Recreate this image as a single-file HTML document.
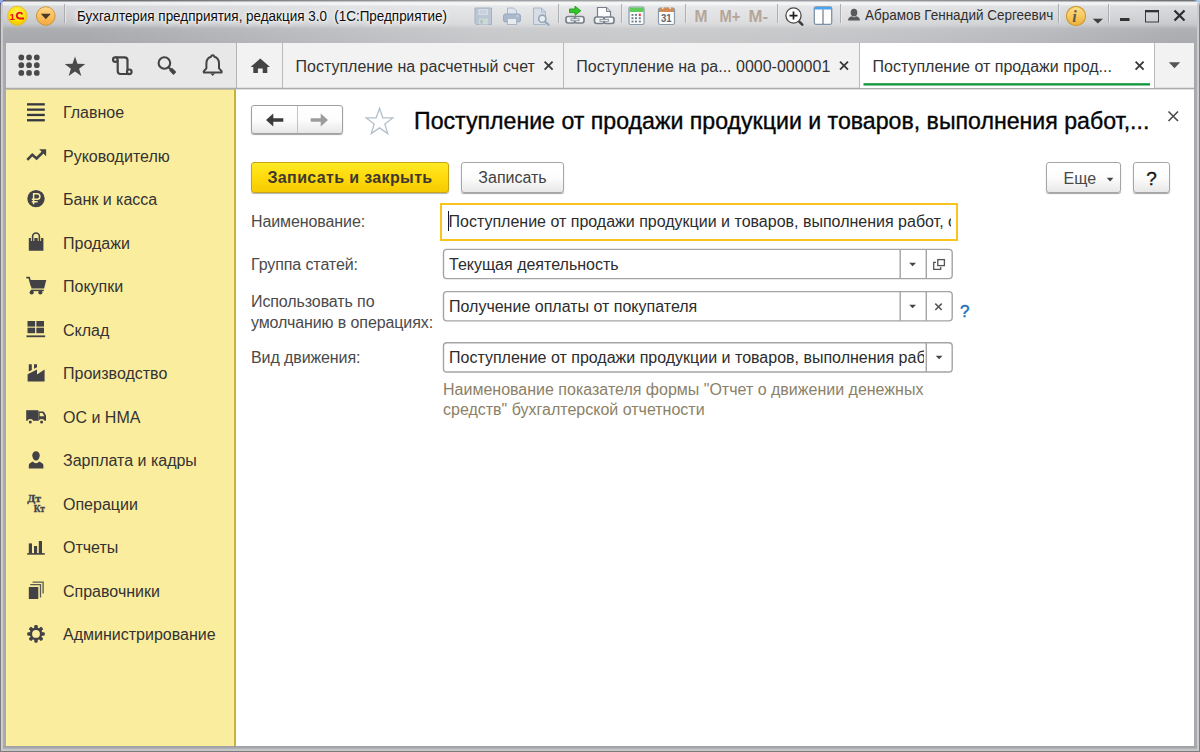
<!DOCTYPE html>
<html lang="ru">
<head>
<meta charset="utf-8">
<title>Бухгалтерия предприятия, редакция 3.0 (1С:Предприятие)</title>
<style>
*{box-sizing:border-box;margin:0;padding:0}
html,body{width:1200px;height:752px;overflow:hidden}
body{position:relative;background:#a4a6aa;font-family:"Liberation Sans",Arial,sans-serif;font-size:16px;color:#333;}
.abs{position:absolute}
svg{display:block;overflow:visible}
/* window frame */
#frame{left:0;top:0;width:1200px;height:752px;background:#a5a7ab}
#fl{left:0;top:3px;width:6px;height:749px;background:linear-gradient(90deg,#7c7c7e 0,#7f7f81 1.100px,#cfcfd0 1.300px,#c9c9cb 3px,#abadb1 3.300px,#a4a6aa 6px)}
#fr{left:1194px;top:3px;width:6px;height:749px;background:linear-gradient(270deg,#7c7c7e 0,#7f7f81 1.100px,#cfcfd0 1.300px,#c9c9cb 3px,#abadb1 3.300px,#a4a6aa 6px)}
#fb{left:0;top:746px;width:1200px;height:6px;background:linear-gradient(180deg,#9a9da2 0,#a6a8ac 1.500px,#b3b5b8 3px,#c6c7c9 3.300px,#c3c4c6 4.600px,#7d7d7f 4.900px,#7b7b7d 6px)}
#fbl{left:0;top:746px;width:3px;height:6px;background:linear-gradient(90deg,#7c7c7e 0,#7f7f81 1.100px,#cfcfd0 1.300px,#c9c9cb 3px)}
#fbr{left:1197px;top:746px;width:3px;height:6px;background:linear-gradient(270deg,#7c7c7e 0,#7f7f81 1.100px,#cfcfd0 1.300px,#c9c9cb 3px)}

#titlebar{left:0;top:0;width:1200px;height:43px;background:linear-gradient(90deg,rgba(255,255,255,0) 0,rgba(255,255,255,0) 7%,rgba(255,255,255,.17) 22%,rgba(255,255,255,.36) 40%,rgba(255,255,255,.38) 55%,rgba(255,255,255,.32) 72%,rgba(255,255,255,.18) 87%,rgba(255,255,255,.04) 98%),linear-gradient(180deg,#66686c 0,#707276 1.200px,#eeeff0 1.800px,#eeeff0 4.800px,#d9dadd 6px,#cecfd2 18px,#c6c7ca 24px,#bdbec1 26px,#aeafb3 28.500px,#aaabaf 34px,#a7a8ac 43px);}
#ttext{left:77px;top:6.500px;font-size:15.200px;color:#0c0c0c;white-space:pre;line-height:18px;transform:scaleX(.885);transform-origin:0 0;text-shadow:0 0 3px #fff,0 0 7px #fff,0 0 10px rgba(255,255,255,.8);}
#user{left:864.500px;top:6px;font-size:15px;color:#2f2f2f;white-space:pre;line-height:18px;transform:scaleX(.898);transform-origin:0 0}
.tsep{width:1px;background:#9a9b9f;box-shadow:1px 0 0 #e6e7e9;top:5px;height:19px}
/* toolbar */
#tools{left:6px;top:43px;width:230px;height:45px;background:#e8e8e8}
#tabs{left:236px;top:43px;width:958px;height:45px;background:#f2f2f2;border-left:1px solid #b4b4b4}
#tabline{left:6px;top:88px;width:1188px;height:1px;background:#acacac;box-shadow:0 1px 0 rgba(170,170,170,.35),0 -1px 0 rgba(170,170,170,.25)}
.tab{top:43px;height:45px;border-right:1px solid #b9b9b9;font-size:16px;line-height:47px;color:#333;white-space:pre}
.tab .x{position:absolute;top:0;font-size:15px;font-weight:bold;color:#333}
/* sidebar */
#side{left:6px;top:89px;width:230px;height:657px;background:#fbed9e;border-right:2px solid #c9b138;border-top:1px solid #d5ca8c;box-shadow:inset 1px 0 0 #fdf3a8,inset -1px 0 0 #fdf3a8}
.nav{left:63px;font-size:16px;color:#333;line-height:20px;white-space:pre}
#main{left:236px;top:89px;width:958px;height:657px;background:#fff}
.lbl{left:251px;font-size:16px;color:#4a4a4a;line-height:18px;white-space:pre;letter-spacing:-.1px}
.fld{left:442px;width:510px;height:30px;border:1px solid transparent;border-radius:3px;background:#fff;font-size:16px;line-height:30px;padding-left:6px;color:#2c2c2c;white-space:pre;overflow:hidden}
.btn{height:32px;border:1px solid #a6a6a6;border-radius:3px;background:linear-gradient(#ffffff,#fdfdfd 50%,#f0f0f0 80%,#e7e7e7);font-size:16px;line-height:30px;text-align:center;color:#424242;box-shadow:0 1px 1px rgba(0,0,0,.36);white-space:pre}
#tb2{background:linear-gradient(90deg,rgba(255,255,255,0) 0,rgba(255,255,255,0) 7%,rgba(255,255,255,.17) 22%,rgba(255,255,255,.36) 40%,rgba(255,255,255,.38) 55%,rgba(255,255,255,.32) 72%,rgba(255,255,255,.18) 87%,rgba(255,255,255,.04) 98%),linear-gradient(180deg,#66686c 0,#707276 1.200px,#eeeff0 1.800px,#eeeff0 4.800px,#d9dadd 6px,#cecfd2 18px,#c6c7ca 24px,#bdbec1 26px,#aeafb3 28.500px,#aaabaf 34px,#a7a8ac 43px);background-size:1200px 43px;background-position:-3px 0;background-repeat:no-repeat}
</style>
</head>
<body>
<div id="frame" class="abs"></div>
<div id="titlebar" class="abs"></div>
<div id="fl" class="abs"></div><div id="fr" class="abs"></div><div id="fb" class="abs"></div><div id="fbl" class="abs" style="height:4.700px"></div><div id="fbr" class="abs" style="height:4.700px"></div>
<div class="abs" style="left:3px;top:0;width:1194px;height:43px" id="tb2"></div>
<div id="ttext" class="abs">Бухгалтерия предприятия, редакция 3.0  (1С:Предприятие)</div>
<div id="user" class="abs">Абрамов Геннадий Сергеевич</div>

<div id="tools" class="abs"></div>
<div id="tabs" class="abs"></div>
<div id="side" class="abs"></div>
<div id="main" class="abs"></div>
<div id="tabline" class="abs"></div>


<div class="abs tab" style="left:237px;width:46px;"></div>
<div class="abs tab" style="left:283px;width:281px;padding-left:12.500px">Поступление на расчетный счет</div>
<div class="abs tab" style="left:564px;width:296px;padding-left:12.300px">Поступление на ра... 0000-000001</div>
<div class="abs tab" style="left:860px;width:295px;padding-left:12.500px;background:#fff">Поступление от продажи прод...</div>


<div class="abs nav" style="top:103.3px">Главное</div>
<div class="abs nav" style="top:146.8px">Руководителю</div>
<div class="abs nav" style="top:190.3px">Банк и касса</div>
<div class="abs nav" style="top:233.8px">Продажи</div>
<div class="abs nav" style="top:277.3px">Покупки</div>
<div class="abs nav" style="top:320.8px">Склад</div>
<div class="abs nav" style="top:364.3px">Производство</div>
<div class="abs nav" style="top:407.8px">ОС и НМА</div>
<div class="abs nav" style="top:451.3px">Зарплата и кадры</div>
<div class="abs nav" style="top:494.8px">Операции</div>
<div class="abs nav" style="top:538.3px">Отчеты</div>
<div class="abs nav" style="top:581.8px">Справочники</div>
<div class="abs nav" style="top:625.3px">Администрирование</div>


<div class="abs btn" style="left:251px;top:105px;width:92px;height:29px;border-color:#9f9f9f"></div>
<div class="abs" style="left:297px;top:106px;width:1px;height:27px;background:#c4c4c4"></div>
<div class="abs" id="h1" style="left:414px;top:107px;font-size:23.15px;line-height:28px;color:#050505;-webkit-text-stroke:.35px #050505;white-space:pre">Поступление от продажи продукции и товаров, выполнения работ,...</div>
<div class="abs" id="ybtn" style="left:251px;top:162px;width:198px;height:31px;letter-spacing:.36px;border:1px solid #c7a413;border-radius:3px;background:linear-gradient(#ffe926,#ffdc0d 45%,#f4cb00);font-weight:bold;font-size:16px;line-height:30px;text-align:center;color:#40382e;box-shadow:0 1px 1px rgba(0,0,0,.3)">Записать и закрыть</div>
<div class="abs btn" style="left:461px;top:162px;width:103px;height:31px;line-height:30px">Записать</div>
<div class="abs btn" style="left:1046px;top:162px;width:75px;height:31px;line-height:32px;text-align:left;padding-left:16.500px;color:#484848">Еще</div>
<div class="abs btn" style="left:1133px;top:162px;width:37px;height:31px;line-height:32px;font-size:19px;color:#111;-webkit-text-stroke:.3px #111">?</div>

<div class="abs lbl" style="top:213px">Наименование:</div>
<div class="abs lbl" style="top:256px">Группа статей:</div>
<div class="abs lbl" style="top:292px;line-height:20.500px">Использовать по
умолчанию в операциях:</div>
<div class="abs lbl" style="top:349px">Вид движения:</div>

<div class="abs fld" style="left:440px;top:203px;width:518px;height:38px;border:2.500px solid #f9c41d;border-radius:0;line-height:33px;padding-left:6.500px;box-shadow:none"><div style="width:502px;overflow:hidden">Поступление от продажи продукции и товаров, выполнения работ, о</div></div>
<div class="abs" style="left:447.700px;top:211px;width:1.500px;height:20px;background:#15153a"></div>
<div class="abs fld" style="top:249px">Текущая деятельность</div>
<div class="abs fld" style="top:291px">Получение оплаты от покупателя</div>
<div class="abs fld" style="top:342px"><div style="width:475px;overflow:hidden">Поступление от продажи продукции и товаров, выполнения работ</div></div>
<div class="abs" style="left:443px;top:380px;font-size:16px;line-height:20px;color:#8b8168;white-space:pre">Наименование показателя формы "Отчет о движении денежных
средств" бухгалтерской отчетности</div>
<div class="abs" style="left:960px;top:301.500px;font-size:17px;line-height:20px;color:#1b6dbb;-webkit-text-stroke:.4px #1b6dbb">?</div>


<svg class="abs" id="ov" style="left:0;top:0" width="1200" height="752" viewBox="0 0 1200 752">
<defs>
<radialGradient id="g1c" cx="0.5" cy="0.35" r="0.7"><stop offset="0" stop-color="#fff36a"/><stop offset="0.6" stop-color="#ffe000"/><stop offset="1" stop-color="#e9b800"/></radialGradient>
<linearGradient id="gor" x1="0" y1="0" x2="0" y2="1"><stop offset="0" stop-color="#ffd98a"/><stop offset="1" stop-color="#f5a83a"/></linearGradient>
<linearGradient id="ginf" x1="0" y1="0" x2="0" y2="1"><stop offset="0" stop-color="#ffe08a"/><stop offset="1" stop-color="#f2b136"/></linearGradient>
</defs>

<g id="titleicons">
<path d="M0 0H6.500A6.500 6.500 0 0 0 0 6.500Z" fill="#4a4a9e"/><path d="M0 0H3.500L0 3.500Z" fill="#8fb0ea"/><path d="M1200 0H1193.500A6.500 6.500 0 0 1 1200 6.500Z" fill="#a9cbf5"/>
<!-- 1C logo -->
<circle cx="17.300" cy="15.800" r="9.600" fill="url(#g1c)" stroke="#e3bd2a" stroke-width="0.900"/>
<text x="9.500" y="19.500" font-family="Liberation Sans, sans-serif" font-weight="bold" font-size="9.800" fill="#e8121a">1</text>
<path d="M22.300 14.400A2.900 2.900 0 1 0 19.600 18.500H24" fill="none" stroke="#e8121a" stroke-width="1.900"/>
<!-- orange menu btn -->
<circle cx="45.8" cy="16" r="9.3" fill="url(#gor)" stroke="#c8963a" stroke-width="1"/>
<path d="M40.8 13.8 h10 l-5 5.4z" fill="#4a3a25"/>
<!-- separators -->
<g stroke="#a4a6aa" stroke-width="1" opacity=".85">
<path d="M64.5 4v19M558.5 4v19M621.5 4v19M685.5 4v19M777.5 4v19M840.5 4v19M1058.5 4v19M1108.5 4v19"/>
</g>
<g stroke="#eceded" stroke-width="1" opacity=".8">
<path d="M65.5 4v19M559.5 4v19M622.5 4v19M686.5 4v19M778.5 4v19M841.5 4v19M1059.5 4v19M1109.5 4v19"/>
</g>
<!-- save (disabled) -->
<g opacity="0.95">
<path d="M475 8h16.5v16.5h-15.2l-1.3-1.3z" fill="#b9c6d4" stroke="#9fb0c2" stroke-width="1"/>
<rect x="478.5" y="9" width="9.5" height="6" fill="#d5dde6"/>
<path d="M480 11h6.5M480 13h6.5" stroke="#b2bfcd" stroke-width=".8"/>
<rect x="479" y="18.5" width="9" height="6" fill="#cfd9d3"/>
<rect x="480.5" y="20" width="2" height="3.5" fill="#a7b6c6"/>
</g>
<!-- printer (disabled) -->
<g>
<path d="M507.5 8h6l3 3v4h-9z" fill="#dfe5ec" stroke="#a9b8c8" stroke-width="1"/>
<rect x="503.5" y="14" width="17" height="8" rx="2" fill="#a9b9cb" stroke="#97a9bd" stroke-width="1"/>
<rect x="507.5" y="18.5" width="9" height="6" fill="#e6ebf0" stroke="#a9b8c8" stroke-width="1"/>
<path d="M516 16h2.5" stroke="#d9e1ea" stroke-width="1"/>
</g>
<!-- preview (disabled) -->
<g>
<path d="M533.5 8h8l4 4v12.5h-12z" fill="#d6dde6" stroke="#a9b8c8" stroke-width="1"/>
<path d="M541.5 8v4h4" fill="none" stroke="#a9b8c8" stroke-width="1"/>
<circle cx="542.3" cy="18.7" r="3.6" fill="#e8edf2" stroke="#93a6ba" stroke-width="1.6"/>
<path d="M545 21.6l3.8 3.3" stroke="#93a6ba" stroke-width="2" stroke-linecap="round"/>
</g>
<!-- link + green arrow -->
<g>
<path d="M569.5 9h5.5v-2.8l5.8 4.6-5.800 4.600v-2.800h-5.500z" fill="#35c42b" stroke="#1e9a18" stroke-width=".9" stroke-linejoin="round"/>
<rect x="566" y="16.500" width="9.500" height="6.500" rx="2.200" fill="#f4f5f6" stroke="#77808a" stroke-width="1.700"/>
<rect x="574.500" y="16.500" width="9.500" height="6.500" rx="2.200" fill="#f4f5f6" stroke="#77808a" stroke-width="1.700"/>
<rect x="571" y="18.800" width="8" height="2" fill="#f4f5f6" stroke="#77808a" stroke-width=".8"/>
</g>
<!-- doc link -->
<g>
<path d="M597.500 7.500h9l4 4v8h-13z" fill="#fdfdfd" stroke="#77808a" stroke-width="1.200"/>
<path d="M606.500 7.500v4h4" fill="#d5dae0" stroke="#77808a" stroke-width="1"/>
<rect x="594.500" y="17" width="10" height="6.500" rx="2.200" fill="#f4f5f6" stroke="#77808a" stroke-width="1.700"/>
<rect x="604" y="17" width="10" height="6.500" rx="2.200" fill="#f4f5f6" stroke="#77808a" stroke-width="1.700"/>
<rect x="600" y="19.300" width="8.500" height="2" fill="#f4f5f6" stroke="#77808a" stroke-width=".8"/>
</g>
<!-- calculator -->
<g>
<rect x="629" y="7" width="15" height="17.500" rx="1.500" fill="#fafbfc" stroke="#8798a8" stroke-width="1.200"/>
<path d="M629.600 8.500a1 1 0 0 1 1-1h12a1 1 0 0 1 1 1v3.500h-14z" fill="#5fcb5a"/>
<g fill="#6c7a86"><rect x="631.500" y="14" width="2" height="1.800"/><rect x="635" y="14" width="2" height="1.800"/><rect x="631.500" y="17.300" width="2" height="1.800"/><rect x="635" y="17.300" width="2" height="1.800"/><rect x="638.800" y="17.300" width="2" height="1.800"/><rect x="631.500" y="20.600" width="2" height="1.800"/><rect x="635" y="20.600" width="2" height="1.800"/><rect x="638.800" y="20.600" width="2" height="1.800"/></g>
<rect x="638.800" y="13.600" width="2" height="2.500" fill="#ef3b3b"/>
</g>
<!-- calendar -->
<g>
<rect x="658.500" y="8" width="16" height="16.500" rx="1.800" fill="#fbfcfd" stroke="#8a99a8" stroke-width="1.200"/>
<path d="M659 10a2 2 0 0 1 2-2.300h11a2 2 0 0 1 2 2.300v2h-15z" fill="#d28b55"/>
<rect x="662" y="6" width="1.500" height="3" fill="#f1e3d6"/><rect x="669.500" y="6" width="1.500" height="3" fill="#f1e3d6"/>
<text x="661" y="22.300" font-family="Liberation Sans, sans-serif" font-size="10.300" font-weight="bold" fill="#61666e" textLength="10.600" lengthAdjust="spacingAndGlyphs">31</text>
</g>
<!-- M M+ M- -->
<g font-family="Liberation Sans, sans-serif" font-weight="bold" font-size="16.400" fill="#b5a699">
<text x="694.500" y="21.800" textLength="13" lengthAdjust="spacingAndGlyphs">M</text>
<text x="719.500" y="21.800" textLength="21" lengthAdjust="spacingAndGlyphs">M+</text>
<text x="748.500" y="21.800" textLength="19.500" lengthAdjust="spacingAndGlyphs">M-</text>
</g>
<!-- zoom -->
<g>
<path d="M799 21.300l3.300 3.300" stroke="#3c3c3c" stroke-width="2.600" stroke-linecap="round"/>
<circle cx="793.500" cy="15.500" r="7.600" fill="#fdfdfd" stroke="#4b4b4b" stroke-width="1.300"/>
<path d="M789.500 15.600h8M793.500 11.600v8" stroke="#1e1e1e" stroke-width="1.700"/>
</g>
<!-- panels -->
<g>
<rect x="814.300" y="7" width="17.400" height="17.300" rx="1.500" fill="#fdfdfe" stroke="#7d91a8" stroke-width="1.300"/>
<path d="M814.300 9.500a2.200 2.200 0 0 1 2.200-2.500h13a2.200 2.200 0 0 1 2.200 2.500z" fill="#4aa5ee"/>
<path d="M823 9.500v14.500" stroke="#566070" stroke-width="1"/>
</g>
<!-- user -->
<g fill="#5a5a5a">
<ellipse cx="854" cy="12.600" rx="3.300" ry="3.900"/>
<path d="M848 20.600c0-3 2-4 3.800-4.300l2.200 1.300 2.200-1.300c1.800.3 3.800 1.300 3.800 4.300z"/>
</g>
<!-- info -->
<circle cx="1076" cy="16" r="9.600" fill="url(#ginf)" stroke="#cc9d3a" stroke-width="1.200"/>
<text x="1072.300" y="21.500" font-family="Liberation Serif, serif" font-style="italic" font-weight="bold" font-size="16" fill="#5e5a52">i</text>
<path d="M1092.700 18.700h10.300l-5.150 4.800z" fill="#3f3f3f"/>
<!-- window controls -->
<rect x="1120" y="18" width="9.500" height="3" fill="#333"/>
<rect x="1145.500" y="11" width="13" height="11" fill="none" stroke="#3a3a3a" stroke-width="1"/>
<rect x="1145" y="10" width="14" height="2.300" fill="#333"/>
<path d="M1174.500 10.500l10 10M1184.500 10.500l-10 10" stroke="#2f2f2f" stroke-width="2.300"/>
</g>


<g id="toolicons" fill="#4a4a4a">
<circle cx="21.30" cy="57.40" r="2.85"/><circle cx="29.05" cy="57.40" r="2.85"/><circle cx="36.80" cy="57.40" r="2.85"/><circle cx="21.30" cy="65.15" r="2.85"/><circle cx="29.05" cy="65.15" r="2.85"/><circle cx="36.80" cy="65.15" r="2.85"/><circle cx="21.30" cy="72.90" r="2.85"/><circle cx="29.05" cy="72.90" r="2.85"/><circle cx="36.80" cy="72.90" r="2.85"/>
<polygon points="75.00,56.50 77.53,63.82 85.27,63.96 79.09,68.63 81.35,76.04 75.00,71.60 68.65,76.04 70.91,68.63 64.73,63.96 72.47,63.82"/>
<!-- history scroll -->
<g fill="none" stroke="#444" stroke-width="2.200">
<path d="M115.300 57.300h9.200a3 3 0 0 1 3 3v11.400"/>
<path d="M117.700 60.200v10.800a3 3 0 0 0 3 3h8"/>
<circle cx="115.300" cy="59.600" r="2.300" fill="#e8e8e8"/>
<circle cx="129.300" cy="71.800" r="2.300" fill="#e8e8e8"/>
</g>
<!-- search -->
<circle cx="164.400" cy="63" r="5.800" fill="none" stroke="#444" stroke-width="2.100"/>
<path d="M168.300 67l3 3" stroke="#444" stroke-width="2"/><path d="M170.600 69.200l4.300 4.300" stroke="#444" stroke-width="4"/>
<!-- bell -->
<path d="M212.700 55.200c.9 0 1.500.6 1.600 1.500 3.200.9 4.700 3.600 4.700 6.800v4.800l2.600 2.900v1.300h-17.800v-1.300l2.600-2.900v-4.800c0-3.200 1.500-5.900 4.700-6.800.1-.9.700-1.500 1.600-1.500z" fill="none" stroke="#444" stroke-width="2" stroke-linejoin="round"/>
<path d="M210.300 73.600h4.800l-2.400 2.300z" fill="#444"/>
<!-- home -->
<path d="M260.300 58.400l9.700 8.700h-2.700v6h-4.600v-4.600h-4.800v4.600h-4.600v-6h-2.700z" fill="#444"/>
<!-- tab closes -->
<g stroke="#3a3a3a" stroke-width="1.850" fill="none">
<path d="M544.600 61.600l8 8M552.600 61.600l-8 8"/>
<path d="M840 61.600l8 8M848 61.600l-8 8"/>
<path d="M1135.600 61.600l8 8M1143.600 61.600l-8 8"/>
</g>
<path d="M1168.800 62.300h11.400l-5.700 6z" fill="#555"/>
<rect x="863.500" y="83.200" width="286.500" height="2.300" fill="#0f953a"/>
</g>


<g id="sideicons" fill="#424246">
<!-- hamburger -->
<g fill="#36363f"><rect x="27" y="103.200" width="17.800" height="2.300"/><rect x="27" y="108.500" width="17.800" height="2.300"/><rect x="27" y="113.800" width="17.800" height="2.300"/><rect x="27" y="119.100" width="17.800" height="2.300"/></g>
<!-- trend -->
<path d="M27.300 159.900l5-5.200 4.300 3.700 6.300-6.200" fill="none" stroke="#424246" stroke-width="2.600" stroke-linejoin="miter"/>
<path d="M39.200 149.300h6.900v6.900z"/>
<!-- ruble -->
<circle cx="36" cy="198.600" r="8.700"/>
<path d="M33.600 204.300v-10.600h3.500a2.800 2.800 0 0 1 0 5.600h-5.300M31.800 201.800h5.800" fill="none" stroke="#fbed9e" stroke-width="1.500"/>
<!-- bag -->
<path d="M28.800 238h14.600v12.800h-14.600z"/>
<path d="M32.600 241v-4.600a3.400 3.400 0 0 1 6.800 0v4.600" fill="none" stroke="#fbed9e" stroke-width="3.400"/>
<path d="M32.600 241.500v-5.100a3.400 3.400 0 0 1 6.800 0v5.100" fill="none" stroke="#424246" stroke-width="1.600"/>
<!-- cart -->
<path d="M26.300 277.600h2.900l2.200 8" fill="none" stroke="#424246" stroke-width="1.600"/>
<path d="M29.300 280h17l-2.200 8.500h-12.500z"/>
<path d="M31 290.400h12.800" stroke="#424246" stroke-width="1.500"/>
<circle cx="31.700" cy="292.400" r="2.100"/><circle cx="40.400" cy="292.400" r="2.100"/>
<!-- warehouse -->
<rect x="27.500" y="321" width="7.600" height="5.600"/><rect x="36.400" y="321" width="7.600" height="5.600"/><rect x="27.500" y="327.700" width="7.600" height="5.500"/><rect x="36.400" y="327.700" width="7.600" height="5.500"/>
<rect x="26.500" y="335.400" width="18.600" height="1.800"/>
<!-- factory -->
<path d="M27.600 381.400V374.200L37 369.600V374.400L44.600 369.400V381.400Z"/>
<path d="M28.800 364.200H31.800V370L28.800 371.500Z"/><path d="M34 364.200H37V367.300L34 368.800Z"/>
<!-- truck -->
<path d="M26.200 410.200h12.200v10.600h-12.200z"/>
<path d="M38.400 411.600h4.600c.5 0 .8.200 1.100.6l1.900 3v5.600h-7.600z"/>
<path d="M39.700 413h2.800l1.900 3.200h-4.700z" fill="#fbed9e"/>
<circle cx="30.300" cy="422" r="2.250" stroke="#fbed9e" stroke-width="1.500"/><circle cx="41.600" cy="422" r="2.250" stroke="#fbed9e" stroke-width="1.500"/>
<!-- person -->
<path d="M36 451.200c2.300 0 3.700 1.700 3.700 4 0 2.700-1.700 5.400-3.700 5.400s-3.700-2.700-3.700-5.400c0-2.300 1.400-4 3.700-4z"/>
<path d="M28.800 468.600v-3.100c0-2 1.700-2.700 4.300-3.900a3 2.200 0 0 0 5.800 0c2.600 1.200 4.500 1.900 4.500 3.900v3.100z"/>
<!-- DtKt -->
<text x="27.200" y="501.900" font-family="Liberation Serif, serif" font-weight="bold" font-size="10.400" textLength="13.800" lengthAdjust="spacingAndGlyphs" stroke="#424246" stroke-width=".35">Дт</text>
<text x="33.800" y="511.800" font-family="Liberation Serif, serif" font-weight="bold" font-size="10.400" textLength="11" lengthAdjust="spacingAndGlyphs" stroke="#424246" stroke-width=".35">Кт</text>
<!-- reports -->
<rect x="28.800" y="543.400" width="3.200" height="10"/><rect x="34" y="546" width="3.100" height="8"/><rect x="38.800" y="541" width="3.200" height="13"/>
<rect x="27.200" y="553.100" width="17.600" height="1.600"/>
<!-- reference books -->
<rect x="28.800" y="587" width="9.500" height="12"/>
<path d="M30.200 584.700h10.300v12.900M32.600 582.200h10.500v11.400" fill="none" stroke="#5a5a55" stroke-width="1.300"/>
<!-- gear -->
<path d="M42.300 633.900a6.300 6.300 0 1 0-12.600 0a6.300 6.300 0 1 0 12.600 0zM39.900 633.900a3.900 3.900 0 1 1-7.800 0a3.900 3.900 0 1 1 7.800 0z" fill-rule="evenodd"/>
<rect x="-1.750" y="-8.800" width="3.500" height="4" rx="1.100" transform="translate(36 633.900) rotate(0)"/><rect x="-1.750" y="-8.800" width="3.500" height="4" rx="1.100" transform="translate(36 633.900) rotate(45)"/><rect x="-1.750" y="-8.800" width="3.500" height="4" rx="1.100" transform="translate(36 633.900) rotate(90)"/><rect x="-1.750" y="-8.800" width="3.500" height="4" rx="1.100" transform="translate(36 633.900) rotate(135)"/><rect x="-1.750" y="-8.800" width="3.500" height="4" rx="1.100" transform="translate(36 633.900) rotate(180)"/><rect x="-1.750" y="-8.800" width="3.500" height="4" rx="1.100" transform="translate(36 633.900) rotate(225)"/><rect x="-1.750" y="-8.800" width="3.500" height="4" rx="1.100" transform="translate(36 633.900) rotate(270)"/><rect x="-1.750" y="-8.800" width="3.500" height="4" rx="1.100" transform="translate(36 633.900) rotate(315)"/>
</g>


<g id="formicons">
<!-- back / fwd arrows -->
<path d="M266 120l7.300-6.400v4.700h10v3.400h-10v4.700z" fill="#3b3b3b"/>
<path d="M328 120l-7.300-6.400v4.700h-10v3.400h10v4.700z" fill="#9c9c9c"/>
<!-- star outline -->
<polygon points="379.50,108.30 382.79,117.77 392.81,117.97 384.83,124.03 387.73,133.63 379.50,127.90 371.27,133.63 374.17,124.03 366.19,117.97 376.21,117.77" fill="#fff" stroke="#b4bfc9" stroke-width="1.300" stroke-linejoin="miter"/>
<!-- close form -->
<path d="M1168.500 111.500l9.500 9.500M1178 111.500l-9.500 9.500" stroke="#4a4a4a" stroke-width="1.600"/>
<!-- Еще arrow -->
<path d="M1106.800 177.800h6.600l-3.300 3.700z" fill="#444"/>
<!-- field buttons -->
<g fill="none" stroke="#a4a4a4" stroke-width="1.400">
<rect x="443.500" y="249.400" width="508.700" height="29.200" rx="3.300"/>
<rect x="443.500" y="291.600" width="508.700" height="29.300" rx="3.300"/>
<rect x="443.500" y="342.800" width="508.700" height="29.200" rx="3.300"/>
<path d="M900.200 249.500v29M926.300 249.500v29M900.200 291.700v29M926.300 291.700v29M926.300 342.900v29"/>
</g>
<g fill="#444"><path d="M909.200 262.700h6.800l-3.400 3.600z"/><path d="M909.200 304.700h6.800l-3.400 3.600z"/><path d="M935.700 355.700h6.800l-3.400 3.600z"/></g>
<path d="M935.300 303.600l6.400 6.400M941.700 303.600l-6.400 6.400" stroke="#555" stroke-width="1.500"/>
<!-- open icon -->
<g fill="none" stroke="#555" stroke-width="1.300"><rect x="937.800" y="259.600" width="6.600" height="6"/><path d="M936 262.300h-2.300v7h7v-2.300"/></g>
</g>

</svg>

</body>
</html>
